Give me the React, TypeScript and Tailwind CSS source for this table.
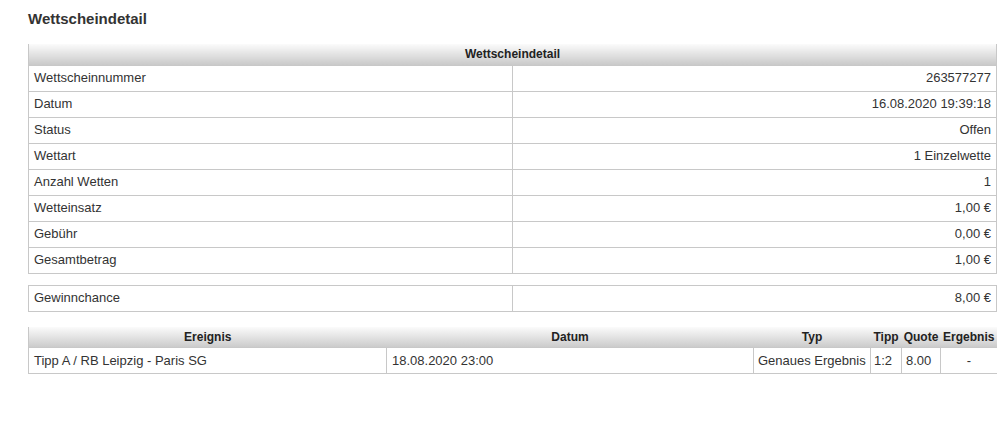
import React from 'react';

const rows: [string, string][] = [
  ['Wettscheinnummer', '263577277'],
  ['Datum', '16.08.2020 19:39:18'],
  ['Status', 'Offen'],
  ['Wettart', '1 Einzelwette'],
  ['Anzahl Wetten', '1'],
  ['Wetteinsatz', '1,00 €'],
  ['Gebühr', '0,00 €'],
  ['Gesamtbetrag', '1,00 €'],
];

const headBg = 'bg-[linear-gradient(to_bottom,#fbfbfb,#c9c9c9)]';
const cell = 'border border-[#c8c8c8] h-[26px] px-[5px] py-0 align-middle text-[13px]';

const App: React.FC = () => {
  return (
    <div className="w-[997px] h-[438px] bg-white pl-[28px] pt-[10px] font-['Liberation_Sans',Arial,sans-serif] text-[12px] text-[#333]">
      <h1 className="text-[15px] font-bold text-[#333] h-[18px] leading-[18px]">Wettscheindetail</h1>

      <table className="mt-[16px] w-[969px] border-collapse table-fixed">
        <thead>
          <tr>
            <th colSpan={2} className={`${headBg} h-[21px] p-0 border-x border-[#c8c8c8] text-[12px] font-bold text-[#222] text-center`}>
              Wettscheindetail
            </th>
          </tr>
        </thead>
        <tbody>
          {rows.map(([label, value]) => (
            <tr key={label}>
              <td className={`${cell} w-[484px] text-left`}>{label}</td>
              <td className={`${cell} text-right`}>{value}</td>
            </tr>
          ))}
        </tbody>
      </table>

      <table className="mt-[11px] w-[969px] border-collapse table-fixed">
        <tbody>
          <tr>
            <td className={`${cell} w-[484px] text-left`}>Gewinnchance</td>
            <td className={`${cell} text-right`}>8,00 €</td>
          </tr>
        </tbody>
      </table>

      <table className="mt-[15px] w-[969px] border-collapse table-fixed">
        <colgroup>
          <col className="w-[358px]" />
          <col className="w-[367px]" />
          <col className="w-[117px]" />
          <col className="w-[31px]" />
          <col className="w-[39px]" />
          <col className="w-[57px]" />
        </colgroup>
        <thead>
          <tr className={headBg}>
            <th className="h-[21px] p-0 border-l border-[#c8c8c8] font-bold text-[#222] text-center">Ereignis</th>
            <th className="h-[21px] p-0 font-bold text-[#222] text-center">Datum</th>
            <th className="h-[21px] p-0 font-bold text-[#222] text-center">Typ</th>
            <th className="h-[21px] p-0 font-bold text-[#222] text-center">Tipp</th>
            <th className="h-[21px] p-0 font-bold text-[#222] text-center">Quote</th>
            <th className="h-[21px] p-0 border-r border-[#c8c8c8] font-bold text-[#222] text-center whitespace-nowrap">Ergebnis</th>
          </tr>
        </thead>
        <tbody>
          <tr>
            <td className={`${cell} text-left`}>Tipp A / RB Leipzig - Paris SG</td>
            <td className={`${cell} text-left`}>18.08.2020 23:00</td>
            <td className={`${cell} !px-[4px] text-left whitespace-nowrap`}>Genaues Ergebnis</td>
            <td className={`${cell} !px-[3px] text-left`}>1:2</td>
            <td className={`${cell} !px-[4px] text-left`}>8.00</td>
            <td className={`${cell} text-center`}>-</td>
          </tr>
        </tbody>
      </table>
    </div>
  );
};

export default App;
